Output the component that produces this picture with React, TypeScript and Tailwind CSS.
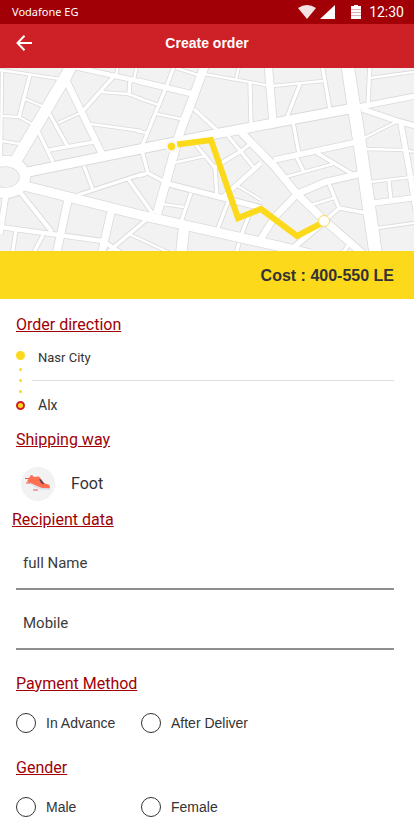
import type { ReactNode } from "react";

type Road = [width: number, points: string];

const roads: Road[] = [
  // main avenues
  [11, "73,62 66,76 15,162"],
  [9, "28,172 140,149 215,134 274,123 354,108"],
  [9, "25,186 140,215 278,246 310,254"],
  [8, "206,62 193,98 180,132 157,214"],
  [12, "347,62 354,107 360,145 376,256"],
  [10, "184,228 181,256"],
  [5, "354,108 420,95"],
  [5, "274,160 357,142"],
  [7, "241,132 274,166 297,194 324,220 363,254"],
  [6, "360,174 325,182 297,194 274,218 259,242"],
  [7, "268,62 273,122"],
  [5, "362,109 397,121 420,127"],
  [5, "401,124 411,180 416,210"],
  [5, "374,203 420,197"],
  [5, "324,222 288,252"],
  [5, "138,81 193,94"],
  [4, "70,66 138,81"],
  [5, "165,183 262,208"],
  [4, "261,163 223,197"],
  [6, "66,80 102,154"],
  [7, "68,200 56,256"],
  [7, "111,212 101,256"],
  [4, "0,227 103,241 122,254"],
  [5, "6,194 0,234"],
  [4, "20,192 52,232"],
  // side streets, left
  [2, "0,70 60,79"],
  [2, "2,71 1,160"],
  [3, "30,75 19,117"],
  [2, "2,116 19,117 32,124"],
  [2, "25,99 42,106"],
  [2, "2,141 20,144"],
  [3, "49,113 68,147"],
  [2, "58,123 80,113"],
  [3, "38,131 53,162"],
  [3, "49,150 94,142"],
  [3, "114,76 83,111"],
  [2, "101,92 128,94 142,99"],
  [3, "130,80 129,94"],
  [2, "118,66 116,76"],
  [2, "137,66 134,79"],
  [2, "91,124 142,131"],
  [3, "84,166 93,190"],
  [3, "78,195 142,174"],
  [3, "128,179 153,214"],
  [3, "16,230 12,256"],
  [3, "43,235 33,254"],
  [3, "146,220 108,252"],
  [2, "129,234 170,253"],
  // side streets, centre
  [3, "175,64 165,90 142,146"],
  [2, "176,68 201,76"],
  [2, "138,98 159,105"],
  [2, "157,114 186,120"],
  [2, "136,131 147,133"],
  [3, "194,109 219,132"],
  [2, "204,74 271,86"],
  [3, "250,82 251,126"],
  [2, "239,66 236,79"],
  [3, "228,136 255,169"],
  [3, "215,167 241,151 250,144"],
  [3, "196,145 215,168 217,196"],
  [2, "173,163 205,156"],
  [2, "238,186 261,200"],
  [3, "228,202 218,228"],
  [3, "249,215 241,236"],
  [3, "191,193 181,222"],
  [2, "162,204 184,207"],
  [3, "142,151 148,173 165,182"],
  [3, "148,173 138,176"],
  [3, "239,243 236,254"],
  // side streets, right
  [2, "272,86 323,81"],
  [3, "322,64 330,110"],
  [3, "300,84 287,117"],
  [3, "370,62 368,105"],
  [2, "370,78 420,71"],
  [2, "398,121 364,138"],
  [2, "363,149 404,150 420,153"],
  [2, "370,182 420,176"],
  [3, "389,181 391,201"],
  [2, "378,228 420,222"],
  [3, "293,122 299,154"],
  [3, "296,156 304,172"],
  [2, "282,178 336,163"],
  [3, "317,153 357,177"],
  [3, "329,184 339,208 366,213"],
  [2, "311,205 334,198"],
  [3, "339,208 326,220"],
  [3, "342,254 350,243"],
];

function RouteMap() {
  return (
    <svg
      className="block h-[183px] w-full bg-[#f2f2f2]"
      viewBox="0 68 414 183"
      preserveAspectRatio="xMidYMid slice"
      role="img"
      aria-label="Route map"
      fill="none"
    >
      <rect x="-400" y="68" width="1200" height="183" fill="#f2f2f2" />
      <g stroke="#dadada">
        {roads.map(([width, points], i) => (
          <polyline key={i} points={points} strokeWidth={width + 2} />
        ))}
        <ellipse cx="5" cy="177" rx="20" ry="16" strokeWidth="12" />
      </g>
      <g stroke="#ffffff">
        {roads.map(([width, points], i) => (
          <polyline key={i} points={points} strokeWidth={width + 0.4} />
        ))}
        <ellipse cx="5" cy="177" rx="20" ry="16" strokeWidth="10.400" />
      </g>
      <polyline points="177,144.500 211,140 238,218 261,209 297,236 324,222" stroke="#fcd91b" strokeWidth="6" />
      <circle cx="171.500" cy="146.500" r="6" fill="#f6f6f6" />
      <circle cx="171.500" cy="146.500" r="3.700" fill="#fcd91b" />
      <circle cx="324" cy="221" r="5.500" fill="#ffffff" stroke="#f3dc60" />
    </svg>
  );
}

function ShoeIcon() {
  return (
    <svg className="size-[26px]" viewBox="0 0 26 26" fill="none" aria-hidden="true">
      <path d="M2 11 L4 10 L12 14 L18 16.500 L25 17 V19 L16 19 L10 16.500 Z" fill="#e0e3ec" />
      <path d="M2 10.500 L5.500 4.500 L7 4 L9 6 L14 5.500 L16 8 L19 12 L24.500 14 L25 17.200 L17 17 L11 14.500 Z" fill="#ff6f52" />
      <path d="M14 8 L16 8.500 L19 12.500 L18.500 13.500 L16 12 Z" fill="#5c4650" />
      <path d="M0 7.500 H4 M1 12 H5 M8 19 H13" stroke="#f0525c" />
    </svg>
  );
}

function Heading({ children }: { children: ReactNode }) {
  return <h2 className="text-base leading-6 text-[#a00006] underline underline-offset-1">{children}</h2>;
}

function RadioOption({ name, label }: { name: string; label: string }) {
  return (
    <label className="flex w-[125px] items-center gap-[10px] font-['Liberation_Sans',Arial,sans-serif] text-sm leading-5 whitespace-nowrap">
      <input
        type="radio"
        name={name}
        className="size-5 shrink-0 appearance-none rounded-full border border-[#333333] checked:border-[6px]"
      />
      {label}
    </label>
  );
}

function TextField({ label, type }: { label: string; type: string }) {
  return (
    <input
      type={type}
      aria-label={label}
      placeholder={label}
      className="block h-[60px] w-full border-b-2 border-[#8f8f8f] bg-transparent px-[7px] pt-2 text-[15px] placeholder:text-[#3c3c3c] focus:outline-none"
    />
  );
}

export default function App() {
  return (
    <div className="min-h-screen bg-white font-[Roboto,sans-serif] text-[#333333]">
      <div className="flex h-6 items-center bg-[#a00006] pr-[10px] pb-px pl-3 text-white">
        <span className="flex-1 font-['Noto_Sans','Open_Sans',sans-serif] text-[11px] leading-4">Vodafone EG</span>
        <svg className="mr-1 h-4 w-[18px]" viewBox="0 0 18 16" aria-hidden="true">
          <path d="M0 4 Q9 -2 18 4 L9 15 Z" fill="#f5e3e3" />
        </svg>
        <svg className="mr-4 h-4 w-[15px]" viewBox="0 0 15 16" aria-hidden="true">
          <path d="M15 1 V15 H0 Z" fill="#ffffff" />
        </svg>
        <svg className="mr-2 h-4 w-[10px]" viewBox="0 0 10 16" aria-hidden="true">
          <path d="M3 1 H7 V2 H10 V15 H0 V2 H3 Z" fill="#ffffff" />
          <path d="M0 5.500 H10 M0 8.500 H10 M0 11.500 H10" stroke="#e0b0b2" />
        </svg>
        <span className="text-sm leading-5">12:30</span>
      </div>

      <header className="grid h-11 grid-cols-[1fr_auto_1fr] items-center bg-[#ce2127] px-4 pb-[6px] text-white">
        <button type="button" aria-label="Back" className="w-4">
          <svg className="size-4" viewBox="0 0 16 16" fill="none" stroke="currentColor" strokeWidth="2" aria-hidden="true">
            <path d="M8.500 0.700 L1.500 8 L8.500 15.300 M1.500 8 H16" />
          </svg>
        </button>
        <h1 className="font-['Liberation_Sans',Arial,sans-serif] text-sm leading-5 font-bold">Create order</h1>
      </header>

      <RouteMap />

      <p className="flex h-12 items-center justify-end bg-[#fcd91b] px-5 pt-[2px] font-['Liberation_Sans',Arial,sans-serif] text-base leading-6 font-bold">
        Cost : 400-550 LE
      </p>

      <main className="pt-[14px] pr-5 pb-3 pl-4">
        <section>
          <Heading>Order direction</Heading>
          <div className="mt-[9px] flex">
            <div className="flex w-[9px] flex-col items-center gap-2 pt-[5px]" aria-hidden="true">
              <span className="size-[9px] rounded-full bg-[#fcd91b]" />
              <span className="size-[3px] rounded-full bg-[#fcd91b]" />
              <span className="size-[3px] rounded-full bg-[#fcd91b]" />
              <span className="size-[3px] rounded-full bg-[#fcd91b]" />
              <span className="size-[9px] rounded-full border-2 border-[#ce2127] bg-[#fcd91b]" />
            </div>
            <div className="ml-[7px] flex-1 text-[13px] leading-6">
              <p className="border-b border-[#dedede] pb-[10px] pl-[6px]">Nasr City</p>
              <p className="pt-3 pl-[6px] text-sm leading-6">Alx</p>
            </div>
          </div>
        </section>

        <section className="mt-[11px]">
          <Heading>Shipping way</Heading>
          <div className="mt-[15px] flex items-center gap-4 pl-[5px] text-base leading-6">
            <span className="flex size-[34px] items-center justify-center rounded-full bg-[#f2f2f2]">
              <ShoeIcon />
            </span>
            Foot
          </div>
        </section>

        <section className="mt-[7px]">
          <div className="-ml-1">
            <Heading>Recipient data</Heading>
          </div>
          <div className="-mt-[2px]">
            <TextField label="full Name" type="text" />
            <TextField label="Mobile" type="tel" />
          </div>
        </section>

        <section className="mt-[22px]" role="radiogroup" aria-label="Payment Method">
          <Heading>Payment Method</Heading>
          <div className="mt-[17px] flex">
            <RadioOption name="payment" label="In Advance" />
            <RadioOption name="payment" label="After Deliver" />
          </div>
        </section>

        <section className="mt-[23px]" role="radiogroup" aria-label="Gender">
          <Heading>Gender</Heading>
          <div className="mt-[17px] flex">
            <RadioOption name="gender" label="Male" />
            <RadioOption name="gender" label="Female" />
          </div>
        </section>
      </main>
    </div>
  );
}
